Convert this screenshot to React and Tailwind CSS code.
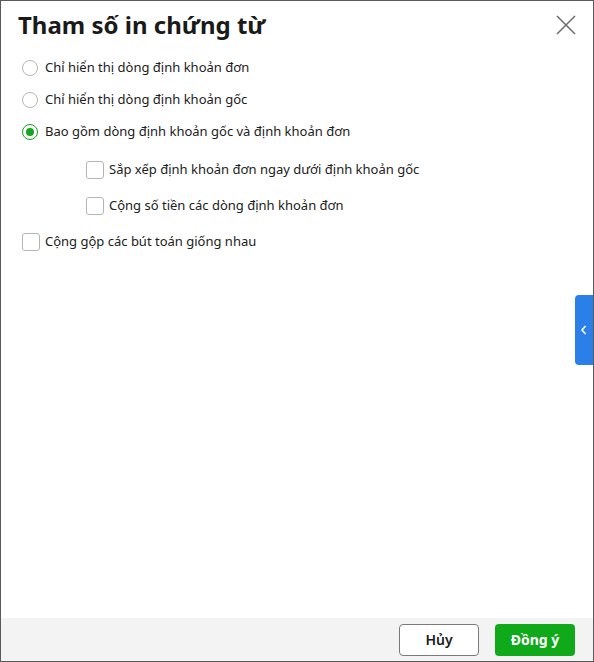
import { useState } from 'react';

const Radio = ({ checked, label, onClick }) => (
  <label className="flex items-center h-[32px] cursor-pointer" onClick={onClick}>
    <span
      className={`w-[16px] h-[16px] rounded-full border flex items-center justify-center ${
        checked ? 'border-[#16a31f]' : 'border-[#b5b5b5]'
      }`}
    >
      {checked && <span className="w-[8px] h-[8px] rounded-full bg-[#16a31f]" />}
    </span>
    <span className="ml-[7px]">{label}</span>
  </label>
);

const Checkbox = ({ checked, label, onClick }) => (
  <label className="flex items-center h-[36px] cursor-pointer" onClick={onClick}>
    <span
      className={`w-[18px] h-[18px] rounded-[3px] border ${
        checked ? 'border-[#16a31f] bg-[#16a31f]' : 'border-[#b5b5b5] bg-white'
      }`}
    />
    <span className="ml-[5px]">{label}</span>
  </label>
);

export default function App() {
  const [mode, setMode] = useState(2);
  const [checks, setChecks] = useState([false, false, false]);

  const toggle = (i) => setChecks((c) => c.map((v, j) => (j === i ? !v : v)));

  return (
    <div
      className="w-[594px] h-[662px] border border-[#5a5a5a] bg-white flex flex-col relative text-[#212121]"
      style={{ fontFamily: '"Noto Sans", "Open Sans", sans-serif' }}
    >
      {/* Header */}
      <div className="flex items-center justify-between pl-[17px] pr-[15px] h-[48px]">
        <h1 className="text-[24px] font-bold text-[#1a1a1a] leading-none">Tham số in chứng từ</h1>
        <button className="w-[24px] h-[24px] flex items-center justify-center" aria-label="Close">
          <svg width="20" height="20" viewBox="0 0 20 20" fill="none" stroke="#6b6b6b" strokeWidth="1.5">
            <path d="M1 1L19 19M19 1L1 19" />
          </svg>
        </button>
      </div>

      {/* Body */}
      <div className="flex-1 px-[21px] pt-[3px] text-[13px]">
        <Radio checked={mode === 0} label="Chỉ hiển thị dòng định khoản đơn" onClick={() => setMode(0)} />
        <Radio checked={mode === 1} label="Chỉ hiển thị dòng định khoản gốc" onClick={() => setMode(1)} />
        <Radio checked={mode === 2} label="Bao gồm dòng định khoản gốc và định khoản đơn" onClick={() => setMode(2)} />
        <div className="pl-[64px] pt-[4px]">
          <Checkbox checked={checks[0]} label="Sắp xếp định khoản đơn ngay dưới định khoản gốc" onClick={() => toggle(0)} />
          <Checkbox checked={checks[1]} label="Cộng số tiền các dòng định khoản đơn" onClick={() => toggle(1)} />
        </div>
        <Checkbox checked={checks[2]} label="Cộng gộp các bút toán giống nhau" onClick={() => toggle(2)} />
      </div>

      {/* Side tab */}
      <div className="absolute right-0 top-[294px] w-[18px] h-[70px] bg-[#2a7fe8] rounded-l-[4px] flex items-center justify-center">
        <svg width="8" height="10" viewBox="0 0 8 10" fill="none" stroke="white" strokeWidth="1.6">
          <path d="M5.5 1L2 5L5.5 9" />
        </svg>
      </div>

      {/* Footer */}
      <div className="h-[43px] bg-[#f3f3f3] flex items-center justify-end gap-[16px] pr-[18px]">
        <button className="w-[80px] h-[32px] rounded-[4px] border border-[#7a7a7a] bg-white text-[14px] font-semibold text-[#1a1a1a]">
          Hủy
        </button>
        <button className="w-[80px] h-[32px] rounded-[4px] bg-[#10a91a] text-[14px] font-bold text-white">
          Đồng ý
        </button>
      </div>
    </div>
  );
}
